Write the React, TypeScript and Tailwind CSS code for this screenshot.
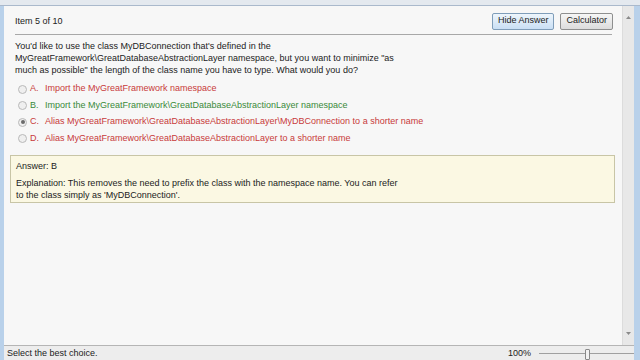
export default function App() {
  const font = { fontFamily: '"Liberation Sans", Arial, sans-serif' }
  const options = [
    { key: 'A', text: 'Import the MyGreatFramework namespace', color: 'text-[#c83a3a]', checked: false },
    { key: 'B', text: 'Import the MyGreatFramework\\GreatDatabaseAbstractionLayer namespace', color: 'text-[#3a8a3a]', checked: false },
    { key: 'C', text: 'Alias MyGreatFramework\\GreatDatabaseAbstractionLayer\\MyDBConnection to a shorter name', color: 'text-[#c83a3a]', checked: true },
    { key: 'D', text: 'Alias MyGreatFramework\\GreatDatabaseAbstractionLayer to a shorter name', color: 'text-[#c83a3a]', checked: false },
  ]

  return (
    <div className="w-[640px] h-[360px] flex flex-col overflow-hidden bg-[#b9d1ea] text-[#222]" style={font}>
      {/* title strip */}
      <div className="h-[6px] bg-[#e4e9ef] border-b border-[#aab9cc] shrink-0" />
      <div className="flex flex-1 min-h-0">
        <div className="w-[4px] bg-[#b9d1ea] shrink-0" />
        <div className="flex-1 flex flex-col min-w-0">
          <div className="flex flex-1 min-h-0 bg-[#f7f7f7]">
            <div className="flex-1 flex flex-col pl-[11px] pr-[10px]">
              {/* header */}
              <div className="flex items-center justify-between h-[27px] mt-[2px] border-b border-[#a8a8a8]">
                <span className="text-[9px] mt-[2px]">Item 5 of 10</span>
                <div className="flex gap-[6px] mr-[-1px]">
                  <button className="h-[17px] px-[5px] text-[9px] border border-[#7f9db9] rounded-[2px] bg-gradient-to-b from-[#eef5fc] to-[#c9dff4]">
                    Hide Answer
                  </button>
                  <button className="h-[17px] px-[5px] text-[9px] border border-[#8e8f8f] rounded-[2px] bg-gradient-to-b from-[#f6f6f6] to-[#dcdcdc]">
                    Calculator
                  </button>
                </div>
              </div>
              {/* question */}
              <p className="text-[9px] leading-[12px] mt-[5px] text-[#222]">
                You'd like to use the class MyDBConnection that's defined in the
                <br />
                MyGreatFramework\GreatDatabaseAbstractionLayer namespace, but you want to minimize "as
                <br />
                much as possible" the length of the class name you have to type. What would you do?
              </p>
              {/* options */}
              <div className="flex flex-col mt-[7px] gap-[4.5px]">
                {options.map((o) => (
                  <div key={o.key} className="flex items-center h-[12px] text-[9px]">
                    <span className="w-[9px] h-[9px] ml-[3px] rounded-full border border-[#b9b9b9] bg-[#efefef] flex items-center justify-center shrink-0">
                      {o.checked && <span className="w-[4px] h-[4px] rounded-full bg-[#6b6b6b]" />}
                    </span>
                    <span className={`ml-[3px] w-[15px] ${o.color}`}>{o.key}.</span>
                    <span className={o.color}>{o.text}</span>
                  </div>
                ))}
              </div>
              {/* answer */}
              <div className="mt-[10px] ml-[-5px] mr-[-3px] border border-[#c8c5a6] bg-[#fbf8e3] px-[5px] pt-[4px] pb-[1px] text-[9px] leading-[12px]">
                <div>Answer: B</div>
                <div className="mt-[5px]">
                  Explanation: This removes the need to prefix the class with the namespace name. You can refer
                  <br />
                  to the class simply as 'MyDBConnection'.
                </div>
              </div>
            </div>
            {/* scrollbar */}
            <div className="w-[12px] bg-[#e8e8e8] border-l border-[#dcdcdc] flex flex-col items-center justify-between py-[10px] shrink-0">
              <svg width="5" height="3" viewBox="0 0 5 3"><path d="M0 3 L2.5 0 L5 3 Z" fill="#8a8a8a" /></svg>
              <svg width="5" height="3" viewBox="0 0 5 3"><path d="M0 0 L2.5 3 L5 0 Z" fill="#8a8a8a" /></svg>
            </div>
          </div>
          {/* status bar */}
          <div className="h-[15px] shrink-0 border-t border-[#b5b5b5] bg-[#ededed] flex items-center text-[9px] pl-[3px] pt-[1px]">
            <span className="flex-1">Select the best choice.</span>
            <span className="mr-[8px]">100%</span>
            <div className="relative w-[95px] h-[14px] flex items-center">
              <div className="w-full h-[1px] bg-[#a0a0a0]" />
              <div className="absolute left-[46px] top-[2px] w-[5px] h-[11px] border border-[#8a8a8a] bg-[#f2f2f2] rounded-[1px]" />
            </div>
          </div>
        </div>
        <div className="w-[6px] bg-[#b9d1ea] shrink-0" />
      </div>
    </div>
  )
}
